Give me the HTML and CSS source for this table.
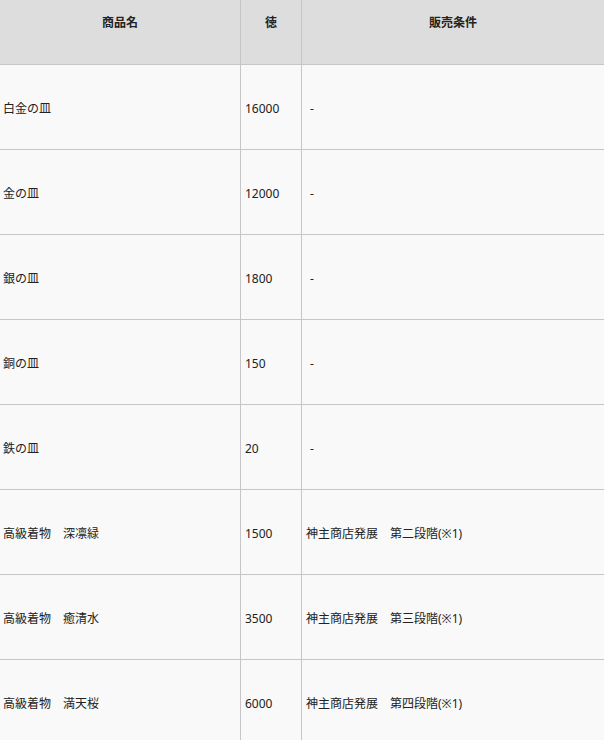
FILE: index.html
```html
<!DOCTYPE html>
<html lang="ja">
<head>
<meta charset="utf-8">
<title>商品一覧</title>
<link rel="stylesheet" href="styles.css">
</head>
<body>
<table class="shop">
  <colgroup>
    <col class="c-name">
    <col class="c-price">
    <col class="c-cond">
  </colgroup>
  <thead>
    <tr><th>商品名</th><th>徳</th><th>販売条件</th></tr>
  </thead>
  <tbody>
    <tr><td>白金の皿</td><td>16000</td><td class="none">-</td></tr>
    <tr><td>金の皿</td><td>12000</td><td class="none">-</td></tr>
    <tr><td>銀の皿</td><td>1800</td><td class="none">-</td></tr>
    <tr><td>銅の皿</td><td>150</td><td class="none">-</td></tr>
    <tr><td>鉄の皿</td><td>20</td><td class="none">-</td></tr>
    <tr><td>高級着物　深凛緑</td><td>1500</td><td>神主商店発展　第二段階(※1)</td></tr>
    <tr><td>高級着物　癒清水</td><td>3500</td><td>神主商店発展　第三段階(※1)</td></tr>
    <tr><td>高級着物　満天桜</td><td>6000</td><td>神主商店発展　第四段階(※1)</td></tr>
  </tbody>
</table>
</body>
</html>
```
FILE: styles.css
```css
html, body {
  margin: 0;
  padding: 0;
  background: #f9f9f9;
}
body {
  font-family: "Noto Sans", "Noto Sans CJK JP", sans-serif;
  font-size: 12px;
  color: #222;
}
.shop {
  border-collapse: separate;
  border-spacing: 0;
  table-layout: fixed;
  width: 604px;
}
.c-name { width: 241px; }
.c-price { width: 61px; }
.c-cond { width: 302px; }
.shop th,
.shop td {
  border-right: 1px solid #c6c6c6;
  border-bottom: 1px solid #c6c6c6;
  line-height: 18px;
  padding: 0;
}
.shop th:last-child,
.shop td:last-child {
  border-right: none;
}
.shop th {
  background: #dddddd;
  font-weight: bold;
  text-align: center;
  vertical-align: top;
  padding: 14px 0 32px;
}
.shop td {
  background: #f9f9f9;
  text-align: left;
  vertical-align: middle;
  padding: 35px 4px 31px 4px;
  white-space: nowrap;
}
.shop td:first-child {
  padding-left: 3px;
}
.shop td.none {
  padding-left: 8px;
}
```
